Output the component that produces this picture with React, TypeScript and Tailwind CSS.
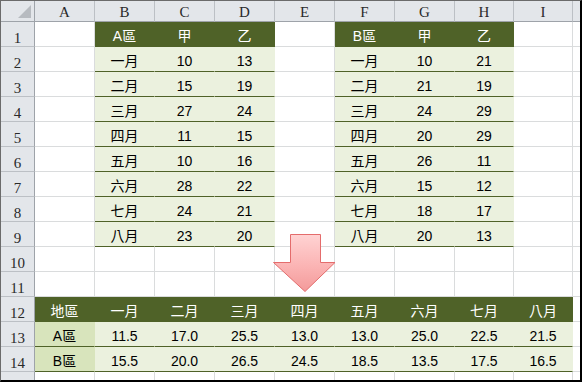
import React from 'react';

type Kind = 'blank' | 'hdr' | 'data' | 'label';

const COLS = ['A', 'B', 'C', 'D', 'E', 'F', 'G', 'H', 'I'];

const tableA = [
  ['A區', '甲', '乙'],
  ['一月', '10', '13'],
  ['二月', '15', '19'],
  ['三月', '27', '24'],
  ['四月', '11', '15'],
  ['五月', '10', '16'],
  ['六月', '28', '22'],
  ['七月', '24', '21'],
  ['八月', '23', '20'],
];

const tableB = [
  ['B區', '甲', '乙'],
  ['一月', '10', '21'],
  ['二月', '21', '19'],
  ['三月', '24', '29'],
  ['四月', '20', '29'],
  ['五月', '26', '11'],
  ['六月', '15', '12'],
  ['七月', '18', '17'],
  ['八月', '20', '13'],
];

const summary = [
  ['地區', '一月', '二月', '三月', '四月', '五月', '六月', '七月', '八月'],
  ['A區', '11.5', '17.0', '25.5', '13.0', '13.0', '25.0', '22.5', '21.5'],
  ['B區', '15.5', '20.0', '26.5', '24.5', '18.5', '13.5', '17.5', '16.5'],
];

// row 1..14, col 1..9 (A..I)
function cellAt(row: number, col: number): { kind: Kind; text: string } {
  if (row >= 1 && row <= 9 && col >= 2 && col <= 4) {
    return { kind: row === 1 ? 'hdr' : 'data', text: tableA[row - 1][col - 2] };
  }
  if (row >= 1 && row <= 9 && col >= 6 && col <= 8) {
    return { kind: row === 1 ? 'hdr' : 'data', text: tableB[row - 1][col - 6] };
  }
  if (row >= 12 && row <= 14) {
    const kind: Kind = row === 12 ? 'hdr' : col === 1 ? 'label' : 'data';
    return { kind, text: summary[row - 12][col - 1] };
  }
  return { kind: 'blank', text: '' };
}

const kindClass: Record<Kind, string> = {
  blank: 'bg-white border-r border-b border-[#DADCDD]',
  hdr: 'bg-[#4F6228] text-white border-r border-b border-[#4F6228]',
  data: 'bg-[#EBF1DE] text-black border-r border-r-[#EBF1DE] border-b border-b-[#4F6228]',
  label: 'bg-[#D8E4BC] text-black border-r border-r-[#D8E4BC] border-b border-b-[#4F6228]',
};

const DownArrow = () => (
  <svg width="64" height="60" viewBox="0 0 64 60" className="absolute left-[271px] top-[232px]">
    <defs>
      <linearGradient id="arrowFill" x1="0" y1="0" x2="0" y2="1">
        <stop offset="0%" stopColor="#FFD3D3" />
        <stop offset="55%" stopColor="#FBB4B4" />
        <stop offset="100%" stopColor="#F39A9A" />
      </linearGradient>
    </defs>
    <polygon
      points="18.5,1.5 48.5,1.5 48.5,29.5 63,29.5 33,58.5 1.5,29.5 18.5,29.5"
      fill="url(#arrowFill)"
      stroke="#E46C6C"
      strokeWidth="1"
    />
  </svg>
);

export default function App() {
  const rows = Array.from({ length: 14 }, (_, i) => i + 1);

  return (
    <div className="w-[582px] h-[382px] bg-white">
      <div className="relative w-[582px] h-[382px] border-t border-l border-[#6B6B6B] border-r-2 border-r-black border-b-2 border-b-black grid grid-cols-[34px_60px_60px_60px_60px_60px_60px_60px_59px_59px_1fr] grid-rows-[21px_repeat(14,25px)_1fr] font-['Liberation_Sans','Noto_Sans_CJK_TC',sans-serif] text-[14px] leading-4">
        {/* corner */}
        <div className="relative bg-[#E3E6EA] border-r border-b border-[#9EA3A9]">
          <div className="absolute right-[3px] bottom-[3px] w-0 h-0 border-l-[13px] border-l-transparent border-b-[13px] border-b-[#B7BBC0]" />
        </div>
        {/* column headers */}
        {COLS.map((c) => (
          <div
            key={c}
            className="bg-[#E3E6EA] border-r border-r-[#BCC0C5] border-b border-b-[#9EA3A9] flex items-center justify-center pt-[1px] font-['Liberation_Serif',serif] text-[15px] text-[#2a2a2a]"
          >
            {c}
          </div>
        ))}
        <div className="bg-[#E3E6EA] border-b border-b-[#9EA3A9]" />

        {rows.map((r) => (
          <React.Fragment key={r}>
            <div className="bg-[#E3E6EA] border-r border-r-[#9EA3A9] border-b border-b-[#BCC0C5] flex items-center justify-center pt-[7px] font-['Liberation_Serif',serif] text-[15px] text-[#2a2a2a]">
              {r}
            </div>
            {COLS.map((_, ci) => {
              const { kind, text } = cellAt(r, ci + 1);
              return (
                <div key={ci} className={`${kindClass[kind]} flex items-center justify-center pt-[3px] whitespace-nowrap`}>
                  {text}
                </div>
              );
            })}
            <div className="bg-white border-b border-[#DADCDD]" />
          </React.Fragment>
        ))}

        {/* partial last row */}
        <div className="bg-[#E3E6EA] border-r border-r-[#9EA3A9]" />
        {COLS.map((c) => (
          <div key={c} className="bg-white border-r border-[#DADCDD]" />
        ))}
        <div className="bg-white" />

        <DownArrow />
      </div>
    </div>
  );
}
